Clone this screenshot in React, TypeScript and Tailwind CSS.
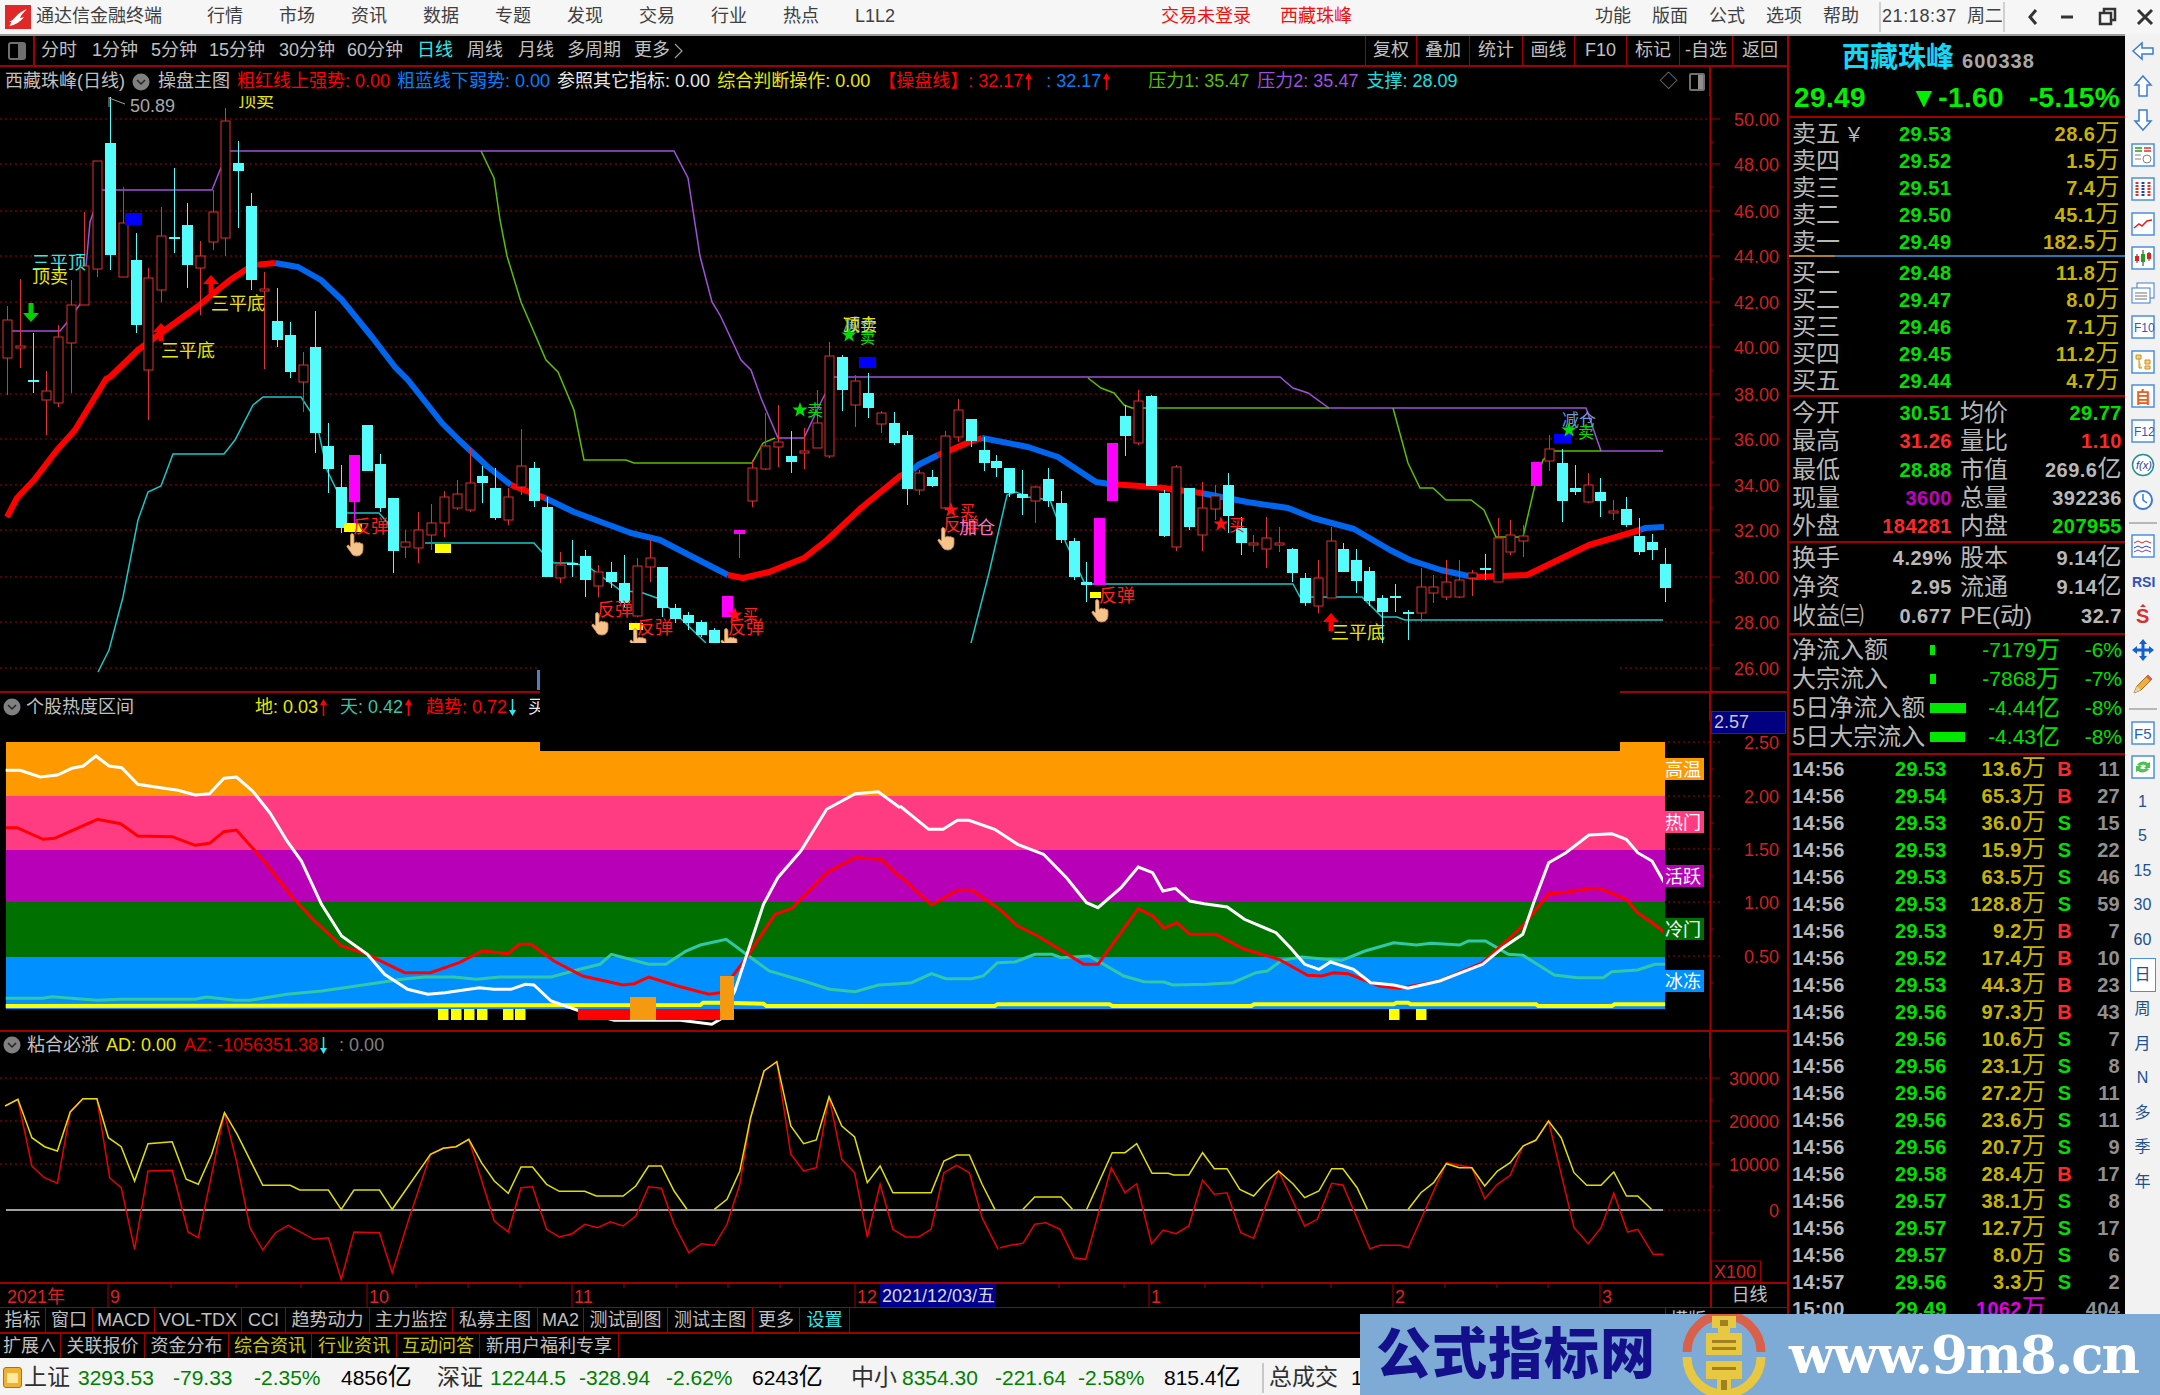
import React from 'react'

// [kind, bodyTop, bodyBottom, wickTop, wickBottom] in page pixels, r = red hollow, c = cyan, m = magenta
type Candle = ['r' | 'c' | 'm', number, number, number, number]
const candles: Candle[] = [
  ['r', 320, 358, 306, 395], ['r', 346, 348, 279, 368], ['c', 380, 381, 333, 393], ['r', 391, 400, 371, 435],
  ['r', 337, 403, 325, 407], ['r', 305, 343, 280, 393], ['r', 266, 305, 212, 305], ['r', 161, 269, 161, 277],
  ['c', 143, 255, 97, 270], ['r', 223, 277, 187, 277], ['c', 260, 325, 233, 333], ['r', 278, 370, 268, 420],
  ['r', 236, 290, 207, 302], ['c', 237, 238, 168, 253], ['c', 225, 265, 203, 288], ['r', 256, 268, 241, 315],
  ['r', 212, 242, 190, 250], ['r', 121, 238, 108, 256], ['c', 163, 171, 141, 228], ['c', 206, 280, 193, 290],
  ['r', 289, 290, 272, 369], ['c', 321, 340, 288, 347], ['c', 335, 372, 322, 378], ['r', 365, 382, 352, 412],
  ['c', 347, 433, 311, 453], ['c', 446, 469, 423, 493], ['c', 487, 528, 465, 533], ['m', 455, 502, 455, 527],
  ['c', 425, 471, 425, 471], ['c', 464, 508, 454, 512], ['c', 498, 551, 498, 573], ['r', 542, 547, 530, 558],
  ['r', 530, 548, 512, 563], ['r', 523, 535, 504, 550], ['r', 497, 523, 491, 537], ['r', 494, 508, 480, 510],
  ['r', 483, 510, 448, 512], ['c', 476, 483, 466, 503], ['c', 488, 518, 468, 520], ['r', 497, 520, 488, 525],
  ['r', 466, 487, 429, 495], ['c', 468, 501, 462, 507], ['c', 507, 577, 497, 577], ['r', 565, 578, 552, 583],
  ['c', 563, 564, 540, 577], ['c', 556, 580, 550, 597], ['r', 572, 586, 565, 597], ['c', 572, 582, 562, 588],
  ['c', 583, 603, 555, 607], ['r', 566, 616, 558, 617], ['r', 558, 567, 540, 582], ['c', 567, 608, 567, 617],
  ['c', 608, 619, 604, 623], ['c', 615, 623, 612, 630], ['c', 622, 635, 620, 637], ['c', 630, 647, 628, 650],
  ['m', 596, 617, 596, 617], ['m', 530, 534, 530, 558], ['r', 468, 501, 460, 507], ['r', 446, 469, 413, 470],
  ['r', 442, 447, 405, 467], ['c', 456, 462, 431, 473], ['r', 451, 452, 428, 469], ['r', 423, 448, 390, 448],
  ['r', 356, 456, 342, 458], ['c', 357, 390, 355, 411], ['r', 381, 405, 375, 427], ['c', 393, 408, 373, 418],
  ['r', 413, 424, 411, 433], ['c', 423, 443, 412, 445], ['c', 435, 489, 431, 505], ['r', 473, 490, 470, 495],
  ['c', 477, 486, 470, 487], ['r', 436, 508, 431, 510], ['r', 410, 437, 399, 442], ['c', 419, 441, 419, 447],
  ['c', 450, 463, 437, 471], ['c', 461, 468, 455, 477], ['c', 468, 493, 468, 497], ['c', 494, 498, 470, 515],
  ['r', 487, 501, 486, 523], ['c', 479, 501, 468, 507], ['c', 503, 540, 491, 543], ['c', 541, 577, 538, 580],
  ['c', 582, 585, 562, 602], ['m', 518, 585, 518, 585], ['m', 443, 501, 443, 501], ['c', 416, 436, 405, 456],
  ['r', 401, 443, 390, 445], ['c', 396, 486, 395, 486], ['c', 493, 536, 490, 537], ['r', 467, 547, 465, 551],
  ['c', 488, 527, 488, 530], ['r', 508, 535, 482, 551], ['r', 496, 509, 485, 520], ['c', 485, 516, 473, 533],
  ['c', 528, 543, 517, 555], ['r', 543, 544, 535, 552], ['r', 538, 549, 517, 568], ['r', 543, 544, 527, 552],
  ['c', 549, 573, 548, 582], ['c', 578, 603, 573, 606], ['r', 578, 606, 560, 613], ['r', 541, 598, 527, 598],
  ['c', 549, 572, 543, 572], ['c', 560, 581, 549, 593], ['c', 571, 601, 567, 606], ['c', 598, 612, 595, 643],
  ['c', 596, 597, 584, 612], ['c', 612, 613, 610, 640], ['r', 587, 613, 568, 622], ['r', 587, 593, 575, 603],
  ['r', 582, 597, 560, 600], ['r', 580, 597, 560, 598], ['r', 573, 578, 570, 596], ['c', 568, 569, 554, 580],
  ['r', 538, 582, 518, 582], ['r', 535, 552, 520, 555], ['r', 536, 541, 525, 557], ['m', 462, 486, 462, 486],
  ['r', 449, 461, 435, 471], ['c', 463, 501, 449, 522], ['c', 488, 492, 465, 495], ['r', 485, 502, 473, 503],
  ['c', 492, 501, 478, 517], ['r', 511, 512, 500, 520], ['c', 509, 525, 497, 527], ['c', 536, 552, 518, 555],
  ['c', 542, 550, 534, 560], ['c', 564, 588, 548, 602],
]

const line = (p: number[][]) => p.map(([x, y]) => `${x},${y}`).join(' ')
const crop = (sx: number, x0: number, y0: number) => (p: number[][]) =>
  p.map(([x, y]) => `${(x / sx + x0).toFixed(1)},${(y / 3 + y0).toFixed(1)}`).join(' ')

const maSegments: { c: string; p: number[][] }[] = [
  { c: '#ff0000', p: [[7, 517], [17, 498], [34, 480], [57, 450], [75, 430], [92, 402], [106, 379], [110, 377], [138, 350], [161, 333], [197, 307], [230, 280], [253, 265], [275, 263]] },
  { c: '#0066ee', p: [[275, 263], [298, 267], [321, 280], [342, 300], [372, 337], [395, 367], [408, 380], [442, 423], [459, 440], [488, 467], [511, 485]] },
  { c: '#ff0000', p: [[511, 485], [545, 498]] },
  { c: '#0066ee', p: [[545, 498], [574, 512], [631, 533], [660, 540], [689, 555], [728, 575]] },
  { c: '#ff0000', p: [[728, 575], [743, 578], [769, 572], [804, 558], [827, 540], [861, 508], [900, 476], [913, 470]] },
  { c: '#0066ee', p: [[913, 470], [918, 465], [938, 455]] },
  { c: '#ff0000', p: [[938, 455], [951, 450], [969, 442], [982, 438]] },
  { c: '#0066ee', p: [[982, 438], [1028, 447], [1058, 457], [1096, 482], [1110, 484]] },
  { c: '#ff0000', p: [[1110, 484], [1155, 487], [1201, 493]] },
  { c: '#0066ee', p: [[1201, 493], [1247, 502], [1288, 508], [1313, 518], [1354, 529], [1390, 550], [1410, 560], [1441, 570], [1468, 576]] },
  { c: '#ff0000', p: [[1468, 576], [1476, 577], [1527, 575], [1558, 560], [1589, 545], [1640, 530]] },
  { c: '#0066ee', p: [[1640, 530], [1645, 528], [1664, 527]] },
]

const purple = [
  [[11, 331], [60, 331], [69, 320], [83, 300], [90, 222], [101, 190], [212, 190], [220, 170], [230, 151], [674, 151], [688, 178], [700, 256], [712, 302], [720, 315], [741, 360], [751, 370], [761, 398], [778, 438], [804, 438], [822, 400], [834, 377], [1280, 377], [1293, 388], [1308, 393], [1329, 408], [1586, 408], [1601, 451], [1663, 451]],
]
const green = [
  [[481, 151], [494, 178], [500, 220], [507, 256], [521, 302], [546, 360], [558, 372], [574, 410], [584, 460], [626, 460], [634, 463], [752, 463], [763, 443], [775, 438]],
  [[1088, 378], [1101, 388], [1114, 393], [1124, 405], [1132, 408], [1329, 408]],
  [[1393, 408], [1408, 463], [1420, 488], [1433, 488], [1446, 500], [1471, 500], [1484, 510], [1496, 537], [1523, 537], [1535, 485], [1543, 460], [1553, 451], [1601, 451]],
]
const teal = [
  [[98, 672], [109, 650], [123, 597], [138, 520], [148, 492], [161, 486], [173, 454], [224, 454], [235, 440], [253, 405], [263, 397], [301, 397], [316, 420], [327, 470], [339, 495], [347, 513], [379, 513], [392, 528]],
  [[425, 543], [534, 543], [542, 552], [554, 563], [574, 563], [590, 568], [620, 590], [643, 593], [657, 598], [675, 613], [706, 643]],
  [[971, 643], [989, 573], [1007, 495], [1016, 492], [1028, 497], [1050, 500], [1066, 543], [1084, 582], [1091, 584], [1293, 584], [1300, 597], [1362, 597], [1382, 617], [1397, 617], [1405, 620], [1663, 620]],
]

const z7 = crop(1.742, 0, 680)
const z8 = crop(1.742, 900, 680)
const z11 = crop(1.568, 0, 1030)
const z12 = crop(1.96, 1000, 1030)

const heat = {
  white: [
    z7([[10, 268], [35, 268], [70, 288], [100, 282], [125, 262], [145, 255], [167, 225], [190, 255], [212, 260], [240, 310], [280, 320], [310, 328], [340, 342], [365, 338], [390, 292], [412, 288], [440, 330], [470, 395], [500, 480], [525, 540], [560, 670], [595, 765], [640, 820], [670, 880], [710, 925], [745, 940], [775, 935], [835, 920], [860, 925], [890, 925], [915, 910], [930, 912], [960, 960], [1005, 987], [1070, 1018], [1095, 1018], [1185, 1018], [1240, 1030], [1255, 1015], [1280, 930], [1330, 670], [1355, 590], [1395, 510], [1440, 385], [1490, 338], [1530, 332], [1568, 380]]),
    z8([[0, 375], [50, 445], [75, 445], [100, 418], [120, 418], [165, 445], [205, 490], [250, 520], [290, 590], [325, 665], [345, 680], [385, 620], [415, 558], [440, 575], [458, 630], [480, 622], [505, 660], [530, 668], [570, 678], [600, 715], [655, 755], [680, 800], [705, 850], [730, 865], [750, 843], [790, 865], [820, 905], [860, 912], [885, 922], [940, 900], [1015, 850], [1050, 800], [1085, 760], [1105, 660], [1130, 545], [1160, 515], [1200, 462], [1240, 458], [1265, 475], [1285, 515], [1310, 540], [1333, 610]]),
  ],
  red: [
    z7([[10, 440], [30, 440], [75, 475], [95, 472], [170, 415], [210, 428], [240, 465], [300, 467], [340, 493], [365, 487], [390, 452], [412, 447], [460, 540], [510, 650], [545, 715], [595, 795], [640, 820], [705, 875], [750, 875], [800, 845], [840, 810], [885, 818], [905, 790], [925, 790], [965, 840], [1015, 885], [1085, 912], [1105, 908], [1130, 888], [1180, 915], [1235, 940], [1255, 935], [1300, 830], [1350, 700], [1380, 682], [1440, 575], [1490, 530], [1535, 535], [1568, 590]]),
    z8([[0, 585], [55, 672], [100, 628], [125, 628], [170, 680], [205, 735], [240, 765], [320, 850], [345, 850], [415, 683], [440, 705], [460, 742], [482, 725], [505, 760], [550, 760], [600, 805], [660, 835], [710, 883], [735, 885], [755, 875], [780, 878], [835, 915], [870, 922], [940, 900], [1015, 845], [1085, 735], [1130, 638], [1155, 635], [1200, 623], [1220, 623], [1265, 655], [1285, 695], [1310, 725], [1333, 755]]),
  ],
  teal: [
    z7([[10, 952], [75, 952], [90, 947], [170, 958], [210, 955], [340, 955], [360, 948], [410, 958], [435, 958], [500, 940], [560, 930], [600, 920], [700, 895], [740, 888], [790, 888], [830, 895], [870, 888], [960, 888], [1010, 865], [1045, 850], [1065, 820], [1130, 850], [1160, 850], [1195, 810], [1220, 792], [1265, 775], [1300, 820], [1340, 870], [1400, 900], [1445, 925], [1490, 932], [1530, 912], [1568, 908]]),
    z8([[0, 908], [20, 905], [55, 878], [80, 893], [125, 893], [145, 885], [170, 845], [200, 843], [235, 820], [265, 820], [280, 830], [330, 825], [390, 885], [425, 902], [460, 903], [475, 912], [535, 910], [580, 905], [620, 875], [640, 870], [665, 838], [700, 828], [740, 835], [770, 838], [810, 810], [860, 785], [900, 792], [925, 787], [975, 792], [990, 780], [1020, 780], [1060, 820], [1085, 823], [1140, 882], [1180, 890], [1225, 890], [1240, 872], [1285, 867], [1315, 850], [1333, 850]]),
  ],
  yellow: [
    z7([[10, 975], [1220, 972], [1225, 965], [1255, 965], [1330, 968], [1335, 975], [1568, 975]]),
    z8([[0, 975], [165, 975], [170, 970], [365, 970], [370, 975], [612, 975], [617, 970], [860, 970], [865, 965], [885, 965], [890, 970], [1108, 970], [1112, 975], [1240, 975], [1245, 970], [1333, 970]]),
  ],
}

const adYellow = [
  z11([[8, 225], [28, 205], [50, 320], [70, 347], [90, 360], [110, 243], [130, 203], [152, 203], [170, 320], [190, 347], [211, 450], [232, 338], [270, 332], [292, 445], [311, 460], [332, 370], [352, 245], [372, 310], [412, 463], [455, 463], [470, 477], [515, 477], [535, 535], [555, 477], [595, 477], [615, 535], [675, 370], [695, 352], [715, 347], [735, 325], [755, 395], [775, 450], [797, 487], [817, 408], [835, 408], [857, 460], [877, 481], [917, 481], [935, 495], [977, 495], [997, 465], [1017, 405], [1037, 405], [1057, 480], [1077, 535]]),
  z11([[1120, 535], [1140, 505], [1160, 420], [1177, 260], [1198, 120], [1218, 92], [1240, 285], [1260, 338], [1280, 327], [1300, 197], [1320, 285], [1340, 318], [1360, 455], [1380, 405], [1400, 485], [1460, 485], [1480, 390], [1500, 372], [1520, 372], [1540, 460], [1560, 535]]),
  z12([[45, 535], [68, 498], [120, 498], [142, 535]]),
  z12([[170, 535], [220, 365], [245, 365], [268, 338], [298, 427], [330, 427], [340, 432], [370, 432], [397, 365], [420, 413], [445, 413], [470, 475], [497, 495], [520, 455], [546, 420], [575, 460], [597, 500], [625, 480], [650, 413], [672, 413], [700, 470], [720, 535]]),
  z12([[800, 535], [825, 485], [850, 455], [875, 398], [900, 410], [925, 410], [950, 465], [975, 420], [1000, 395], [1025, 345], [1050, 328], [1075, 270], [1100, 320], [1125, 425], [1150, 463], [1178, 463], [1203, 423], [1228, 495], [1250, 495], [1277, 535]]),
]
const adRed = [
  z11([[8, 225], [28, 205], [50, 405], [70, 440], [90, 457], [110, 243], [130, 203], [152, 203], [172, 440], [190, 470], [211, 655], [232, 420], [270, 418], [295, 603], [311, 620], [332, 430], [352, 245], [372, 400], [392, 590], [412, 657], [432, 605], [452, 583], [492, 625], [515, 620], [535, 745], [555, 603], [595, 605], [615, 725], [640, 570], [675, 370], [695, 352], [715, 347], [735, 325], [775, 570], [797, 603], [817, 470], [835, 467], [857, 595], [877, 618], [897, 608], [917, 580], [937, 590], [957, 572], [977, 585], [997, 555], [1017, 467], [1037, 472], [1057, 580], [1080, 665], [1100, 638], [1120, 643], [1140, 580], [1160, 460], [1177, 260], [1198, 120], [1218, 92], [1240, 370], [1260, 420], [1280, 410], [1300, 197], [1320, 385], [1340, 425], [1360, 618], [1380, 460], [1400, 595], [1420, 618], [1440, 618], [1460, 595], [1480, 425], [1500, 403], [1520, 425], [1540, 560], [1565, 655]]),
  z12([[0, 650], [20, 643], [45, 637], [68, 580], [90, 575], [118, 595], [145, 680], [168, 685], [218, 410], [245, 485], [268, 458], [297, 638], [320, 597], [345, 608], [370, 585], [397, 447], [420, 490], [445, 485], [472, 605], [497, 622], [546, 420], [597, 585], [622, 565], [650, 457], [672, 462], [725, 653], [745, 643], [785, 643], [800, 650], [875, 395], [925, 410], [950, 503], [975, 460], [1000, 433], [1025, 345], [1050, 328], [1075, 270], [1125, 590], [1153, 638], [1178, 590], [1203, 487], [1230, 603], [1250, 595], [1280, 670], [1300, 670]]),
]

const priceGrid: [number, string][] = [
  [119, '50.00'], [164, '48.00'], [211, '46.00'], [256, '44.00'], [302, '42.00'], [347, '40.00'], [394, '38.00'],
  [439, '36.00'], [485, '34.00'], [530, '32.00'], [577, '30.00'], [622, '28.00'], [668, '26.00'],
]

function Star({ x, y, c }: { x: number; y: number; c: string }) {
  const pts = Array.from({ length: 10 }, (_, i) => {
    const r = i % 2 ? 3.2 : 8
    const a = (Math.PI / 5) * i - Math.PI / 2
    return `${x + r * Math.cos(a)},${y + r * Math.sin(a)}`
  }).join(' ')
  return <polygon points={pts} fill={c} />
}

function Hand({ x, y }: { x: number; y: number }) {
  return (
    <path
      transform={`translate(${x - 9} ${y - 12})`}
      d="M6 1c1.5-1 3 0 3 2v7l1 .2c.4-1.400 2.500-1.400 3 0 .6-1 2.600-.8 3 .6.8-.6 2-.2 2 1.200v4c0 4-2 7-6 7-3 0-5-1-6-3.500L2 14c-.5-1.500 1-2.500 2-1.500L5.500 14V3c0-1 0-1.600.5-2z"
      fill="#f6c48a"
      stroke="#c98a45"
      strokeWidth="0.8"
    />
  )
}

function UpArrow({ x, y, c = '#ff0000' }: { x: number; y: number; c?: string }) {
  return <path d={`M${x} ${y}l8 9h-5.500v9h-5v-9h-5.500z`} fill={c} />
}

function Arr({ c, down }: { c: string; down?: boolean }) {
  return (
    <svg viewBox="0 0 7 17" className={`inline-block w-[7px] h-[17px] ml-[2px] align-[-3px] ${down ? 'rotate-180' : ''}`}>
      <path d="M3.500 0L7 6H4.300v11H2.700V6H0z" fill={c} />
    </svg>
  )
}

function MainChart() {
  return (
    <svg viewBox="0 96 1787 595" className="block w-[1787px] h-[595px]">
      {priceGrid.map(([y, t]) => (
        <g key={t}>
          <line x1="0" x2="1710" y1={y} y2={y} stroke="#a80000" strokeDasharray="2 3" />
          <line x1="1710" x2="1720" y1={y} y2={y} stroke="#a00000" />
          <line x1="1710" x2="1714" y1={y + 23} y2={y + 23} stroke="#a00000" />
          <text x="1779" y={y + 7} fontSize="18" fill="#d02020" textAnchor="end">{t}</text>
        </g>
      ))}
      <line x1="1710.500" x2="1710.500" y1="96" y2="691" stroke="#a00000" strokeWidth="2" />
      {maSegments.map((s, i) => (
        <polyline key={i} points={line(s.p)} fill="none" stroke={s.c} strokeWidth="6" strokeLinejoin="round" />
      ))}
      {purple.map((p, i) => <polyline key={i} points={line(p)} fill="none" stroke="#a050d8" strokeWidth="1.500" />)}
      {green.map((p, i) => <polyline key={i} points={line(p)} fill="none" stroke="#58c000" strokeWidth="1.500" />)}
      {teal.map((p, i) => <polyline key={i} points={line(p)} fill="none" stroke="#18c8c8" strokeWidth="1.500" />)}
      {candles.map(([k, top, bottom, hi, lo], i) => {
        const x = Math.round(7 + 12.85 * i)
        const c = k === 'r' ? '#e03030' : k === 'c' ? '#54fcfc' : '#ff00ff'
        return (
          <g key={i}>
            <line x1={x + 0.5} x2={x + 0.5} y1={hi} y2={lo} stroke={c} />
            {k === 'r' ? (
              <rect x={x - 4} y={top} width="9" height={Math.max(bottom - top, 2)} fill="#000" stroke={c} />
            ) : (
              <rect x={x - 5} y={top} width="11" height={Math.max(bottom - top, 2)} fill={c} />
            )}
          </g>
        )
      })}
      <rect x="125" y="213" width="17" height="12" fill="#0000ff" />
      <rect x="859" y="357" width="17" height="11" fill="#0000ff" />
      <rect x="1554" y="434" width="17" height="9" fill="#0000ff" />
      <rect x="344" y="523" width="18" height="9" fill="#ffff00" />
      <rect x="435" y="544" width="16" height="9" fill="#ffff00" />
      <rect x="629" y="623" width="14" height="7" fill="#ffff00" />
      <rect x="1090" y="592" width="11" height="6" fill="#ffff00" />

      <path d="M109 97v10M109 98l16 6" stroke="#a0a0a0" fill="none" />
      <text x="130" y="112" fontSize="18" fill="#a8a8a8">50.89</text>
      <text x="238" y="107" fontSize="18" fill="#e8e800">顶卖</text>
      <text x="32" y="269" fontSize="18" fill="#30e8e8">三平顶</text>
      <text x="32" y="283" fontSize="18" fill="#e8e800">顶卖</text>
      <text x="211" y="310" fontSize="18" fill="#e8e800">三平底</text>
      <text x="161" y="357" fontSize="18" fill="#e8e800">三平底</text>
      <text x="1331" y="639" fontSize="18" fill="#e8e800">三平底</text>
      <UpArrow x={211} y={275} />
      <UpArrow x={161} y={323} />
      <UpArrow x={1331} y={613} />
      <path d="M31 322l-8-9h5.500v-10h5v10h5.500z" fill="#00d000" />

      <text x="353" y="533" fontSize="18" fill="#ff2020">反弹</text>
      <text x="597" y="616" fontSize="18" fill="#ff2020">反弹</text>
      <text x="637" y="634" fontSize="18" fill="#ff2020">反弹</text>
      <text x="728" y="634" fontSize="18" fill="#ff2020">反弹</text>
      <text x="1099" y="602" fontSize="18" fill="#ff2020">反弹</text>
      <text x="943" y="531" fontSize="18" fill="#ff2020">反弹</text>
      <text x="959" y="534" fontSize="18" fill="#ff70c0">加仓</text>
      <Hand x={354} y={545} />
      <Hand x={599} y={624} />
      <Hand x={637} y={640} />
      <Hand x={728} y={640} />
      <Hand x={945} y={539} />
      <Hand x={1099} y={611} />

      <Star x={735} y={615} c="#ff1010" />
      <text x="743" y="620" fontSize="15" fill="#ff2020">买</text>
      <Star x={951} y={510} c="#ff1010" />
      <text x="960" y="516" fontSize="15" fill="#ff2020">买</text>
      <Star x={1221} y={524} c="#ff1010" />
      <text x="1229" y="531" fontSize="16" fill="#ff2020">买</text>
      <Star x={800} y={410} c="#00e000" />
      <text x="807" y="416" fontSize="16" fill="#00e000">卖</text>
      <text x="843" y="331" fontSize="17" fill="#5f9ad8">减仓</text>
      <text x="843" y="331" fontSize="17" fill="#e8e800">顶卖</text>
      <Star x={849} y={335} c="#00e000" />
      <text x="860" y="343" fontSize="15" fill="#00e000">卖</text>
      <text x="1562" y="426" fontSize="17" fill="#6f98d8">减仓</text>
      <Star x={1569} y={430} c="#00e000" />
      <text x="1578" y="438" fontSize="16" fill="#00e000">卖</text>
    </svg>
  )
}

function HeatChart() {
  const bands: [number, number, string][] = [
    [741, 54, '#ff9900'], [795, 54, '#ff3c82'], [849, 52, '#b800b8'], [901, 55, '#007000'], [956, 52, '#0090ff'],
  ]
  const tags: [number, string, string][] = [
    [757, '高温', '#ff9900'], [810, '热门', '#ff3c82'], [864, '活跃', '#b800b8'], [917, '冷门', '#007000'], [969, '冰冻', '#0090ff'],
  ]
  const axis: [number, string][] = [[741, '2.50'], [795, '2.00'], [848, '1.50'], [901, '1.00'], [955, '0.50']]
  const yellowBars = [438, 451, 464, 477, 503, 515, 1389, 1416]
  return (
    <svg viewBox="0 720 1787 309" className="block w-[1787px] h-[309px]">
      {bands.map(([y, h, c]) => <rect key={y} x="6" y={y} width="1659" height={h} fill={c} />)}
      {axis.map(([y, t]) => (
        <g key={t}>
          <line x1="1668" x2="1720" y1={y} y2={y} stroke="#a80000" strokeDasharray="2 3" />
          <line x1="1710" x2="1714" y1={y + 27} y2={y + 27} stroke="#a00000" />
          <text x="1779" y={y + 7} fontSize="18" fill="#d02020" textAnchor="end">{t}</text>
        </g>
      ))}
      <line x1="1710.500" x2="1710.500" y1="720" y2="1029" stroke="#a00000" strokeWidth="2" />
      {heat.yellow.map((p, i) => <polyline key={i} points={p} fill="none" stroke="#ffff00" strokeWidth="4" />)}
      {heat.teal.map((p, i) => <polyline key={i} points={p} fill="none" stroke="#30c8a8" strokeWidth="3" />)}
      {heat.red.map((p, i) => <polyline key={i} points={p} fill="none" stroke="#ff0000" strokeWidth="3" />)}
      {heat.white.map((p, i) => <polyline key={i} points={p} fill="none" stroke="#ffffff" strokeWidth="3" />)}
      {yellowBars.map((x) => <rect key={x} x={x} y="1008" width="10.500" height="11" fill="#ffff00" />)}
      <rect x="578" y="1008" width="142" height="11" fill="#ff0000" />
      <rect x="630" y="996" width="26" height="23" fill="#f59a10" />
      <rect x="720" y="975" width="14" height="44" fill="#f59a10" />
      {tags.map(([y, t, c]) => (
        <g key={t}>
          <rect x="1663" y={y} width="41" height="22" fill={c} />
          <text x="1665" y={y + 18} fontSize="18" fill="#ffffff">{t}</text>
        </g>
      ))}
    </svg>
  )
}

function AdChart() {
  const grid: [number, string][] = [[1077, '30000'], [1120, '20000'], [1163, '10000']]
  return (
    <svg viewBox="0 1057 1787 224" className="block w-[1787px] h-[224px]">
      {grid.map(([y, t]) => (
        <g key={t}>
          <line x1="0" x2="1710" y1={y} y2={y} stroke="#a80000" strokeDasharray="2 3" />
          <line x1="1710" x2="1720" y1={y} y2={y} stroke="#a00000" />
          <line x1="1710" x2="1714" y1={y + 22} y2={y + 22} stroke="#a00000" />
          <text x="1779" y={y + 7} fontSize="18" fill="#d02020" textAnchor="end">{t}</text>
        </g>
      ))}
      <line x1="1663" x2="1720" y1="1209" y2="1209" stroke="#a80000" strokeDasharray="2 3" />
      <line x1="1710" x2="1714" y1="1232" y2="1232" stroke="#a00000" />
      <text x="1779" y="1216" fontSize="18" fill="#d02020" textAnchor="end">0</text>
      <line x1="6" x2="1663" y1="1209" y2="1209" stroke="#a0a0a0" strokeWidth="2" />
      <line x1="1710.500" x2="1710.500" y1="1057" y2="1281" stroke="#a00000" strokeWidth="2" />
      <rect x="1711.500" y="1260" width="49" height="20" fill="none" stroke="#a00000" />
      <text x="1714" y="1277" fontSize="18" fill="#d02020">X100</text>
      {adRed.map((p, i) => <polyline key={i} points={p} fill="none" stroke="#e80000" strokeWidth="1.500" />)}
      {adYellow.map((p, i) => <polyline key={i} points={p} fill="none" stroke="#e0e000" strokeWidth="1.500" />)}
    </svg>
  )
}

function DateAxis() {
  const months: [number, string][] = [[108, '9'], [367, '10'], [572, '11'], [855, '12'], [1149, '1'], [1393, '2'], [1600, '3']]
  const ticks = [171, 236, 301, 416, 468, 520, 624, 676, 728, 780, 907, 1059, 1124, 1205, 1262, 1331, 1445, 1497, 1548]
  return (
    <svg viewBox="0 1283 1710 23" className="block w-[1710px] h-[23px]">
      <text x="7" y="1302" fontSize="18" fill="#e02020">2021年</text>
      {months.map(([x, t]) => (
        <g key={t}>
          <line x1={x} x2={x} y1="1283" y2="1306" stroke="#a00000" />
          <text x={x + 2} y="1302" fontSize="18" fill="#e02020">{t}</text>
        </g>
      ))}
      {ticks.map((x) => <line key={x} x1={x} x2={x} y1="1283" y2="1287" stroke="#a00000" />)}
      <rect x="880" y="1283" width="116" height="23" fill="#000090" />
      <text x="882" y="1301" fontSize="18" fill="#d8d8d8">2021/12/03/五</text>
    </svg>
  )
}

function CircleDown() {
  return (
    <svg viewBox="0 0 18 18" className="w-[18px] h-[18px] shrink-0">
      <circle cx="9" cy="9" r="8.500" fill="#808080" />
      <path d="M5 7l4 4 4-4" fill="none" stroke="#222" strokeWidth="1.500" />
    </svg>
  )
}

const periods = [
  { t: '分时', w: 'w-[51px]' }, { t: '1分钟', w: 'w-[59px]' }, { t: '5分钟', w: 'w-[58px]' }, { t: '15分钟', w: 'w-[70px]' },
  { t: '30分钟', w: 'w-[68px]' }, { t: '60分钟', w: 'w-[70px]' }, { t: '日线', w: 'w-[50px]', c: 'text-[#30e8e8]' },
  { t: '周线', w: 'w-[51px]' }, { t: '月线', w: 'w-[49px]' }, { t: '多周期', w: 'w-[67px]' },
]
const rightTools = [
  { t: '复权', w: 'w-[51px]' }, { t: '叠加', w: 'w-[53px]' }, { t: '统计', w: 'w-[53px]' }, { t: '画线', w: 'w-[52px]' },
  { t: 'F10', w: 'w-[52px]' }, { t: '标记', w: 'w-[53px]' }, { t: '-自选', w: 'w-[53px]' }, { t: '返回', w: 'w-[55px]' },
]
const tabs1 = [
  { t: '指标', w: 'w-[46px]' }, { t: '窗口', w: 'w-[47px]' }, { t: 'MACD', w: 'w-[62px]' }, { t: 'VOL-TDX', w: 'w-[87px]' },
  { t: 'CCI', w: 'w-[44px]' }, { t: '趋势动力', w: 'w-[84px]' }, { t: '主力监控', w: 'w-[83px]' }, { t: '私募主图', w: 'w-[85px]' },
  { t: 'MA2', w: 'w-[46px]' }, { t: '测试副图', w: 'w-[84px]' }, { t: '测试主图', w: 'w-[85px]' }, { t: '更多', w: 'w-[47px]' },
  { t: '设置', w: 'w-[50px]', c: 'text-[#30e8e8]' },
]
const tabs2 = [
  { t: '扩展∧', w: 'w-[61px]' }, { t: '关联报价', w: 'w-[84px]' }, { t: '资金分布', w: 'w-[84px]' },
  { t: '综合资讯', w: 'w-[83px]', c: 'text-[#c8c800]' }, { t: '行业资讯', w: 'w-[85px]', c: 'text-[#c8c800]' },
  { t: '互动问答', w: 'w-[83px]', c: 'text-[#c8c800]' }, { t: '新用户福利专享', w: 'w-[139px]' },
]

function TitleBar() {
  const menu = ['行情', '市场', '资讯', '数据', '专题', '发现', '交易', '行业', '热点']
  return (
    <div className="h-[36px] shrink-0 flex items-center bg-[#f6f6f6] border-b-2 border-[#9a9a9a] text-[18px] text-[#404040] pb-[1px]">
      <svg viewBox="0 0 26 24" className="ml-[5px] w-[26px] h-[24px] shrink-0">
        <rect width="26" height="24" fill="#e02828" />
        <path d="M4 17C10 15 11 8 22 4c-4 4-6 6-7 9 2 0 3-1 4-1-3 4-8 8-15 9 1-1 2-2 2-4z" fill="#fff" />
      </svg>
      <span className="ml-[5px] w-[171px] shrink-0">通达信金融终端</span>
      <div className="flex gap-[36px] shrink-0">
        {menu.map((m) => <span key={m}>{m}</span>)}
      </div>
      <span className="ml-[36px] w-[306px] shrink-0">L1L2</span>
      <span className="w-[119px] shrink-0 text-[#f01010]">交易未登录</span>
      <span className="w-[315px] shrink-0 text-[#f01010]">西藏珠峰</span>
      <div className="flex gap-[21px] shrink-0">
        {['功能', '版面', '公式', '选项', '帮助'].map((m) => <span key={m}>{m}</span>)}
      </div>
      <span className="ml-[20px] h-[30px] border-l-2 border-[#d0d0d0] pl-[1px] flex items-center w-[124px] shrink-0 tracking-[0.6px]">
        21:18:37<span className="ml-[10px] tracking-normal">周二</span>
      </span>
      <span className="h-[30px] border-l-2 border-[#d0d0d0] flex-1 flex items-center text-[#333]">
        <svg viewBox="0 0 157 30" className="w-[157px] h-[30px]">
          <path d="M31 8l-6 7 6 7" fill="none" stroke="#333" strokeWidth="3" />
          <path d="M56 15h12" stroke="#333" strokeWidth="3" />
          <path d="M95 11h11v11H95zM99 10V7h11v11h-4" fill="none" stroke="#333" strokeWidth="2.500" />
          <path d="M133 8l14 14M147 8l-14 14" stroke="#333" strokeWidth="3" />
        </svg>
      </span>
    </div>
  )
}

function Toolbar() {
  return (
    <div className="h-[31px] shrink-0 flex items-center border-b-2 border-[#a00000] text-[18px] text-[#c0c0c0]">
      <div className="w-[35px] h-[29px] border-r-2 border-[#a00000] flex items-center justify-center shrink-0">
        <span className="w-[18px] h-[18px] rounded-[3px] border-2 border-[#707070] flex justify-end">
          <span className="w-[6px] bg-[#707070]" />
        </span>
      </div>
      <div className="ml-[6px] flex w-[1324px] shrink-0">
        {periods.map((p) => <span key={p.t} className={`${p.w} shrink-0 ${p.c ?? ''}`}>{p.t}</span>)}
        <span className="flex items-center">
          更多
          <svg viewBox="0 0 9 16" className="ml-[4px] w-[9px] h-[16px]"><path d="M1 1l7 7-7 7" fill="none" stroke="#a0a0a0" strokeWidth="1.200" /></svg>
        </span>
      </div>
      {rightTools.map((p) => (
        <span key={p.t} className={`${p.w} h-[29px] border-l border-[#a00000] flex items-center justify-center shrink-0`}>{p.t}</span>
      ))}
    </div>
  )
}

function MainLegend() {
  return (
    <div className="h-[29px] w-[1711px] flex items-center border-r-2 border-[#a00000] text-[18px] whitespace-nowrap">
      <span className="ml-[5px] text-[#c0c0c0]">西藏珠峰(日线)</span>
      <span className="ml-[7px]"><CircleDown /></span>
      <span className="ml-[8px] text-[#c0c0c0]">操盘主图</span>
      <span className="ml-[7px] text-[#ff0000]">粗红线上强势: 0.00</span>
      <span className="ml-[7px] text-[#0080ff]">粗蓝线下弱势: 0.00</span>
      <span className="ml-[7px] text-[#e8e8e8]">参照其它指标: 0.00</span>
      <span className="ml-[7px] text-[#e8e800]">综合判断操作: 0.00</span>
      <span className="ml-[8px] text-[#ff0000]">【操盘线】: 32.17<Arr c="#ff0000" /></span>
      <span className="ml-[14px] text-[#0080ff]">: 32.17<Arr c="#ff0000" /></span>
      <span className="ml-[38px] text-[#58c000]">压力1: 35.47</span>
      <span className="ml-[8px] text-[#a050e0]">压力2: 35.47</span>
      <span className="ml-[8px] text-[#18e0e0]">支撑: 28.09</span>
      <span className="ml-[202px] text-[#808080]">◇</span>
      <span className="ml-[12px] w-[16px] h-[18px] rounded-[2px] border-2 border-[#707070] flex justify-end">
        <span className="w-[5px] bg-[#909090]" />
      </span>
    </div>
  )
}

function HeatLegend() {
  return (
    <div className="h-[28px] w-[1711px] flex items-center border-r-2 border-[#a00000] text-[18px] whitespace-nowrap">
      <span className="ml-[3px]"><CircleDown /></span>
      <span className="ml-[5px] w-[229px] text-[#c0c0c0]">个股热度区间</span>
      <span className="w-[85px] text-[#e8e800]">地: 0.03<Arr c="#ff0000" /></span>
      <span className="w-[86px] text-[#30c8a8]">天: 0.42<Arr c="#ff0000" /></span>
      <span className="w-[102px] text-[#ff0000]">趋势: 0.72<Arr c="#30e8e8" down /></span>
      <span className="text-[#e8e8e8]">买</span>
    </div>
  )
}

function AdLegend() {
  return (
    <div className="h-[26px] w-[1711px] flex items-center border-r-2 border-[#a00000] text-[18px] whitespace-nowrap">
      <span className="ml-[3px]"><CircleDown /></span>
      <span className="ml-[6px] w-[79px] text-[#c0c0c0]">粘合必涨</span>
      <span className="w-[78px] text-[#e8e800]">AD: 0.00</span>
      <span className="text-[#e00000]">AZ: -1056351.38<Arr c="#30e8e8" down /></span>
      <span className="ml-[12px] text-[#808080]">: 0.00</span>
    </div>
  )
}

function Wan({ u = '万' }: { u?: string }) {
  return <span className="text-[24px] font-normal leading-none">{u}</span>
}

const sells: [string, string, string][] = [['卖五', '29.53', '28.6'], ['卖四', '29.52', '1.5'], ['卖三', '29.51', '7.4'], ['卖二', '29.50', '45.1'], ['卖一', '29.49', '182.5']]
const buys: [string, string, string][] = [['买一', '29.48', '11.8'], ['买二', '29.47', '8.0'], ['买三', '29.46', '7.1'], ['买四', '29.45', '11.2'], ['买五', '29.44', '4.7']]

function BookRow({ r, yen }: { r: [string, string, string]; yen?: boolean }) {
  return (
    <div className="h-[27px] flex items-center pl-[3px] pr-[5px]">
      <span className="w-[107px] shrink-0 text-[24px] text-[#b8b8b8] leading-none">
        {r[0]}{yen && <span className="ml-[4px] text-[20px]">￥</span>}
      </span>
      <span className="text-[20px] font-bold tracking-[0.5px] text-[#00e000]">{r[1]}</span>
      <span className="ml-auto text-[20px] font-bold tracking-[0.5px] text-[#c8b400]">{r[2]}<Wan /></span>
    </div>
  )
}

const G = 'text-[#00e000]', R = 'text-[#ff2828]', W = 'text-[#b8b8b8]', M = 'text-[#c000c0]'
const stats: [string, string, string, string, string, string, string?][] = [
  ['今开', '30.51', G, '均价', '29.77', G], ['最高', '31.26', R, '量比', '1.10', R], ['最低', '28.88', G, '市值', '269.6', W, '亿'],
  ['现量', '3600', M, '总量', '392236', W], ['外盘', '184281', R, '内盘', '207955', G],
]
const stats2: [string, string, string, string, string, string, string?][] = [
  ['换手', '4.29%', W, '股本', '9.14', W, '亿'], ['净资', '2.95', W, '流通', '9.14', W, '亿'], ['收益㈢', '0.677', W, 'PE(动)', '32.7', W],
]

function StatRow({ r, h }: { r: [string, string, string, string, string, string, string?]; h: string }) {
  return (
    <div className={`${h} flex items-center pl-[3px] pr-[3px] text-[20px] font-bold tracking-[0.5px]`}>
      <span className="w-[160px] shrink-0 flex items-center justify-between">
        <span className="text-[24px] font-normal tracking-normal text-[#b8b8b8] leading-none">{r[0]}</span>
        <span className={r[2]}>{r[1]}</span>
      </span>
      <span className="ml-[8px] text-[24px] font-normal tracking-normal text-[#b8b8b8] leading-none">{r[3]}</span>
      <span className={`ml-auto ${r[5]}`}>{r[4]}{r[6] && <Wan u={r[6]} />}</span>
    </div>
  )
}

const flows: { l: string; w: string; v: string; u: string; p: string }[] = [
  { l: '净流入额', w: 'w-[5px]', v: '-7179', u: '万', p: '-6%' },
  { l: '大宗流入', w: 'w-[6px]', v: '-7868', u: '万', p: '-7%' },
  { l: '5日净流入额', w: 'w-[36px]', v: '-4.44', u: '亿', p: '-8%' },
  { l: '5日大宗流入', w: 'w-[35px]', v: '-4.43', u: '亿', p: '-8%' },
]

const trades: [string, string, string, string, string][] = [
  ['14:56', '29.53', '13.6', 'B', '11'], ['14:56', '29.54', '65.3', 'B', '27'], ['14:56', '29.53', '36.0', 'S', '15'],
  ['14:56', '29.53', '15.9', 'S', '22'], ['14:56', '29.53', '63.5', 'S', '46'], ['14:56', '29.53', '128.8', 'S', '59'],
  ['14:56', '29.53', '9.2', 'B', '7'], ['14:56', '29.52', '17.4', 'B', '10'], ['14:56', '29.53', '44.3', 'B', '23'],
  ['14:56', '29.56', '97.3', 'B', '43'], ['14:56', '29.56', '10.6', 'S', '7'], ['14:56', '29.56', '23.1', 'S', '8'],
  ['14:56', '29.56', '27.2', 'S', '11'], ['14:56', '29.56', '23.6', 'S', '11'], ['14:56', '29.56', '20.7', 'S', '9'],
  ['14:56', '29.58', '28.4', 'B', '17'], ['14:56', '29.57', '38.1', 'S', '8'], ['14:56', '29.57', '12.7', 'S', '17'],
  ['14:56', '29.57', '8.0', 'S', '6'], ['14:57', '29.56', '3.3', 'S', '2'], ['15:00', '29.49', '1062', '', '404'],
]

function QuotePanel() {
  return (
    <div className="w-[336px] shrink-0 overflow-hidden">
      <div className="h-[43px] flex items-center pl-[53px]">
        <span className="text-[28px] font-bold leading-none text-[#10d8f8]">西藏珠峰</span>
        <span className="ml-[8px] mt-[6px] text-[20px] font-bold tracking-[1px] text-[#a8a8a8]">600338</span>
      </div>
      <div className="h-[39px] flex items-center pl-[5px] border-b-2 border-[#a00000] text-[28px] font-bold text-[#00f000] tracking-[0.4px]">
        <span>29.49</span>
        <span className="ml-[44px]">▼-1.60</span>
        <span className="ml-auto pr-[5px]">-5.15%</span>
      </div>
      <div className="pt-[2px]">
        {sells.map((r, i) => <BookRow key={r[0]} r={r} yen={i === 0} />)}
      </div>
      <div className="flex h-[2px] bg-[#2878b0] mb-[2px]"><span className="w-[46px] bg-[#b08020]" /></div>
      {buys.map((r) => <BookRow key={r[0]} r={r} />)}
      <div className="border-t-2 border-[#a00000] mt-[1px] pt-[2px] pb-[1px]">
        {stats.map((r) => <StatRow key={r[0]} r={r} h="h-[28.250px]" />)}
      </div>
      <div className="border-t-2 border-[#a00000] pb-[3px]">
        {stats2.map((r) => <StatRow key={r[0]} r={r} h="h-[29px]" />)}
      </div>
      <div className="border-t-2 border-[#a00000] pb-[2px]">
        {flows.map((f) => (
          <div key={f.l} className="h-[29px] flex items-center pl-[3px] pr-[3px]">
            <span className="w-[138px] shrink-0 text-[24px] leading-none text-[#b8b8b8] whitespace-nowrap">{f.l}</span>
            <span className={`${f.w} h-[10px] bg-[#00e800] shrink-0`} />
            <span className="ml-auto flex items-center text-[21px] text-[#00e000]">{f.v}<Wan u={f.u} /></span>
            <span className="w-[62px] text-right text-[21px] text-[#00e000]">{f.p}</span>
          </div>
        ))}
      </div>
      <div className="border-t-2 border-[#a00000]">
        {trades.map((t, i) => (
          <div key={i} className="h-[27px] flex items-center pl-[3px] pr-[5px] text-[20px] font-bold tracking-[0.3px]">
            <span className="w-[103px] shrink-0 text-[#b8b8b8]">{t[0]}</span>
            <span className="w-[60px] shrink-0 text-[#00e000]">{t[1]}</span>
            <span className={`w-[91px] shrink-0 text-right ${t[3] === '' ? 'text-[#e000e0]' : 'text-[#c8b400]'}`}>{t[2]}<Wan /></span>
            <span className={`w-[37px] text-center shrink-0 ${t[3] === 'B' ? 'text-[#ff2828]' : 'text-[#00e000]'}`}>{t[3]}</span>
            <span className="ml-auto text-[#909090]">{t[4]}</span>
          </div>
        ))}
      </div>
    </div>
  )
}

function Box({ children, c = '#4a90e0' }: { children: React.ReactNode; c?: string }) {
  return (
    <svg viewBox="0 0 24 24" className="w-[24px] h-[24px]">
      <rect x="1" y="1" width="22" height="22" fill="#fff" stroke={c} strokeWidth="1.500" />
      {children}
    </svg>
  )
}
function Glyph({ children }: { children: React.ReactNode }) {
  return <svg viewBox="0 0 24 24" className="w-[24px] h-[24px]">{children}</svg>
}

const B = '#3a7ad8'
const sideTop: React.ReactNode[] = [
  <Glyph><path d="M2 12l9-8v5h11v6H11v5z" fill="#fff" stroke={B} strokeWidth="1.500" /></Glyph>,
  <Glyph><path d="M12 2l8 9h-4v11H8V11H4z" fill="#fff" stroke={B} strokeWidth="1.500" /></Glyph>,
  <Glyph><path d="M12 22l8-9h-4V2H8v11H4z" fill="#fff" stroke={B} strokeWidth="1.500" /></Glyph>,
  <Box><path d="M4 5h7M4 8h7" stroke="#20a020" strokeWidth="1.500" /><path d="M13 5h7M13 8h7" stroke="#e03030" strokeWidth="1.500" /><circle cx="16" cy="16" r="4" fill="none" stroke="#808080" /><path d="M4 12h6M4 16h6" stroke="#808080" /></Box>,
  <Box><path d="M6 5v15" stroke="#e03030" strokeWidth="3" strokeDasharray="2 1" /><path d="M12 5v15" stroke="#2040c0" strokeWidth="3" strokeDasharray="2 1" /><path d="M18 5v15" stroke="#e03030" strokeWidth="3" strokeDasharray="2 1" /></Box>,
  <Box><path d="M3 16l5-4 3 2 5-5 5-1" fill="none" stroke="#e02020" strokeWidth="1.500" /></Box>,
  <Box><path d="M6 8v9M12 4v16M18 6v9" stroke="#303030" /><rect x="4" y="10" width="4" height="5" fill="#e02020" /><rect x="10" y="8" width="4" height="8" fill="#20a020" /><rect x="16" y="7" width="4" height="6" fill="#e02020" /></Box>,
  <Glyph><rect x="6" y="2" width="17" height="15" fill="#fff" stroke={B} /><rect x="1" y="7" width="18" height="15" fill="#fff" stroke={B} /><path d="M4 12h12M4 15h12M4 18h12" stroke="#707070" /></Glyph>,
  <Box><text x="3" y="17" fontSize="12" fill="#2060c0">F10</text></Box>,
  <Box><path d="M5 5h5v4H5zM8 9v9h3M14 10h5v4h-5zM14 16h5v3h-5z" fill="#f8d070" stroke="#d09020" /></Box>,
  <Box><text x="4" y="19" fontSize="16" fontWeight="700" fill="#e86020">自</text></Box>,
  <Box><text x="3" y="17" fontSize="12" fill="#2060c0">F12</text></Box>,
  <Glyph><circle cx="12" cy="12" r="10.500" fill="#fff" stroke="#209090" strokeWidth="1.500" /><text x="5" y="16" fontSize="11" fontStyle="italic" fill="#2040a0">f(x)</text></Glyph>,
  <Glyph><circle cx="12" cy="12" r="9" fill="#fff" stroke={B} strokeWidth="2" /><path d="M12 6v6l4 3" fill="none" stroke={B} strokeWidth="1.500" /></Glyph>,
]
const sideMid: React.ReactNode[] = [
  <Box><path d="M3 9l4-2 4 2 4-2 5 2" fill="none" stroke="#e02020" /><path d="M3 14l4-2 4 2 4-2 5 2" fill="none" stroke="#2040c0" /><path d="M3 18l4-2 4 2 4-2 5 2" fill="none" stroke="#8040c0" /></Box>,
  <Glyph><text x="1" y="18" fontSize="14" fontWeight="700" fill="#3050c0">RSI</text></Glyph>,
  <Glyph><text x="5" y="20" fontSize="20" fontWeight="700" fill="#d83030">S</text><path d="M12 1l3 3H9z" fill="#d83030" /></Glyph>,
  <Glyph><path d="M12 1l4 5h-2.500v4.500H18V8l5 4-5 4v-2.500h-4.500V18H16l-4 5-4-5h2.500v-4.500H6V16l-5-4 5-4v2.500h4.500V6H8z" fill="#1060d0" /></Glyph>,
  <Glyph><path d="M3 21l3-7L17 3l4 4L10 18z" fill="#f0b040" stroke="#a07020" /><path d="M3 21l3-7 4 4z" fill="#e8d0a0" /><path d="M17 3l4 4-2 2-4-4z" fill="#e06060" /></Glyph>,
]
const sideBottom: React.ReactNode[] = [
  <Box><text x="3" y="18" fontSize="15" fill="#2060c0">F5</text></Box>,
  <Box><path d="M6 10a7 6 0 0 1 11-2l2-1v6h-6l2-2a4 4 0 0 0-6 0z" fill="#50c050" /><path d="M18 14a7 6 0 0 1-11 2l-2 1v-6h6l-2 2a4 4 0 0 0 6 0z" fill="#50c050" /></Box>,
]
const sideText = ['1', '5', '15', '30', '60']
const sideCjk = ['周', '月', 'N', '多', '季', '年']

function Sidebar() {
  return (
    <div className="flex-1 -mt-[2px] bg-[#f2f2f2] flex flex-col items-center text-[16px] text-[#205090]">
      {sideTop.map((n, i) => <div key={i} className="h-[34.500px] flex items-center justify-center shrink-0">{n}</div>)}
      <div className="h-[12px] w-[28px] shrink-0 flex items-center"><span className="h-[2px] w-full bg-[#b8b8b8]" /></div>
      {sideMid.map((n, i) => <div key={i} className="h-[34.500px] flex items-center justify-center shrink-0">{n}</div>)}
      <div className="h-[14px] w-[28px] shrink-0 flex items-center"><span className="h-[2px] w-full bg-[#b8b8b8]" /></div>
      {sideBottom.map((n, i) => <div key={i} className="h-[34.500px] flex items-center justify-center shrink-0">{n}</div>)}
      {sideText.map((t) => <div key={t} className="h-[34.500px] flex items-center justify-center shrink-0">{t}</div>)}
      <div className="h-[34px] w-[26px] mt-[1px] border border-[#4a90e0] bg-white flex items-center justify-center shrink-0">日</div>
      {sideCjk.map((t) => <div key={t} className="h-[34.500px] flex items-center justify-center shrink-0">{t}</div>)}
    </div>
  )
}

function Watermark() {
  return (
    <div className="absolute right-0 bottom-0 w-[800px] h-[81px] bg-[#7eaad6] flex items-center overflow-hidden">
      <span className="ml-[16px] w-[306px] shrink-0 text-[55px] font-black leading-none tracking-[1px] text-[#14108c]">公式指标网</span>
      <svg viewBox="0 0 84 81" className="w-[84px] h-[81px] shrink-0">
        <path d="M5 38A37 37 0 0 1 79 38" fill="none" stroke="#d9604a" strokeWidth="9" />
        <path d="M79 43A37 37 0 0 1 42 80 37 37 0 0 1 5 43" fill="none" stroke="#e8c840" strokeWidth="9" />
        <path d="M30 2h24v12H48v5h12v22H24V19h12v-5h-6zM24 47h36v18H49v14H35V65H24z" fill="#e8c840" />
        <path d="M38 6h8v6h-8zM30 26h24v3H30zM30 33h24v3H30zM30 53h24v3H30zM39 66h6v10h-6z" fill="#a08020" />
      </svg>
      <span className="ml-[23px] text-[53px] font-bold leading-none text-white whitespace-nowrap tracking-[-2px] [font-family:'DejaVu_Serif',serif]">www.9m8.cn</span>
    </div>
  )
}

function StatusBar() {
  const q = (n: string, w: string) => <span className={`${w} shrink-0 text-[#008000]`}>{n}</span>
  const v = (n: string, w: string) => <span className={`${w} shrink-0 text-[#000]`}>{n}<span className="font-normal text-[24px] leading-none">亿</span></span>
  const l = (n: string, w: string) => <span className={`${w} shrink-0 text-[23px] text-[#303030] leading-none`}>{n}</span>
  return (
    <div className="flex-1 flex items-center bg-[#f4f4f4] pt-[2px] text-[21px] whitespace-nowrap overflow-hidden">
      <span className="ml-[3px] w-[19px] h-[21px] rounded-[3px] bg-[#f0b030] border border-[#b07010] flex items-center justify-center shrink-0">
        <span className="w-[11px] h-[10px] bg-[#ffe9a0]" />
      </span>
      <span className="ml-[2px]">{l('上证', 'w-[54px] block')}</span>
      {q('3293.53', 'w-[95px]')}{q('-79.33', 'w-[81px]')}{q('-2.35%', 'w-[87px]')}{v('4856', 'w-[96px]')}
      {l('深证', 'w-[53px]')}{q('12244.5', 'w-[89px]')}{q('-328.94', 'w-[87px]')}{q('-2.62%', 'w-[86px]')}{v('6243', 'w-[99px]')}
      {l('中小', 'w-[51px]')}{q('8354.30', 'w-[93px]')}{q('-221.64', 'w-[83px]')}{q('-2.58%', 'w-[86px]')}{v('815.4', 'w-[98px]')}
      <span className="h-[30px] border-l-2 border-[#c8c8c8] pl-[5px] flex items-center text-[23px] text-[#303030]">
        总成交<span className="ml-[13px] text-[21px] text-black">1</span>
      </span>
    </div>
  )
}

export default function App() {
  return (
    <div className="relative w-[2160px] h-[1395px] overflow-hidden bg-black flex flex-col text-[18px] [font-family:'Liberation_Sans','Noto_Sans_CJK_SC',sans-serif]">
      <TitleBar />
      <div className="h-[1322px] shrink-0 flex">
        <div className="w-[1787px] shrink-0 border-r-2 border-[#a00000] box-content">
          <Toolbar />
          <MainLegend />
          <MainChart />
          <div className="h-[2px] bg-[#a00000]" />
          <HeatLegend />
          <HeatChart />
          <div className="h-[2px] bg-[#a00000]" />
          <AdLegend />
          <AdChart />
          <div className="h-[2px] bg-[#a00000]" />
          <div className="h-[23px] flex border-b border-[#a00000] box-content">
            <DateAxis />
            <span className="flex-1 border-l-2 border-[#a00000] flex items-center justify-center text-[#c0c0c0]">日线</span>
          </div>
          <div className="h-[24px] flex border-b-2 border-[#a00000] box-content text-[#c0c0c0] whitespace-nowrap">
            {tabs1.map((t) => (
              <span key={t.t} className={`${t.w} shrink-0 border-r border-[#a00000] flex items-center justify-center ${t.c ?? ''}`}>{t.t}</span>
            ))}
            <span className="ml-auto w-[45px] border-l border-[#a00000] flex items-center justify-center mr-[77px]">模版</span>
          </div>
          <div className="h-[25px] flex border-b-2 border-[#a00000] box-content text-[#c0c0c0] whitespace-nowrap">
            {tabs2.map((t) => (
              <span key={t.t} className={`${t.w} shrink-0 border-r border-[#a00000] flex items-center justify-center ${t.c ?? ''}`}>{t.t}</span>
            ))}
          </div>
        </div>
        <QuotePanel />
        <Sidebar />
      </div>
      <StatusBar />
      <div className="absolute left-[540px] top-[643px] w-[1080px] h-[108px] bg-black" />
      <div className="absolute left-[537px] top-[670px] w-[3px] h-[20px] bg-[#5080c0]" />
      <div className="absolute left-[1711px] top-[711px] w-[75px] h-[23px] bg-[#000080] border border-[#a00000] pl-[2px] leading-[21px] text-[#c8c8c8]">2.57</div>
      <Watermark />
    </div>
  )
}
